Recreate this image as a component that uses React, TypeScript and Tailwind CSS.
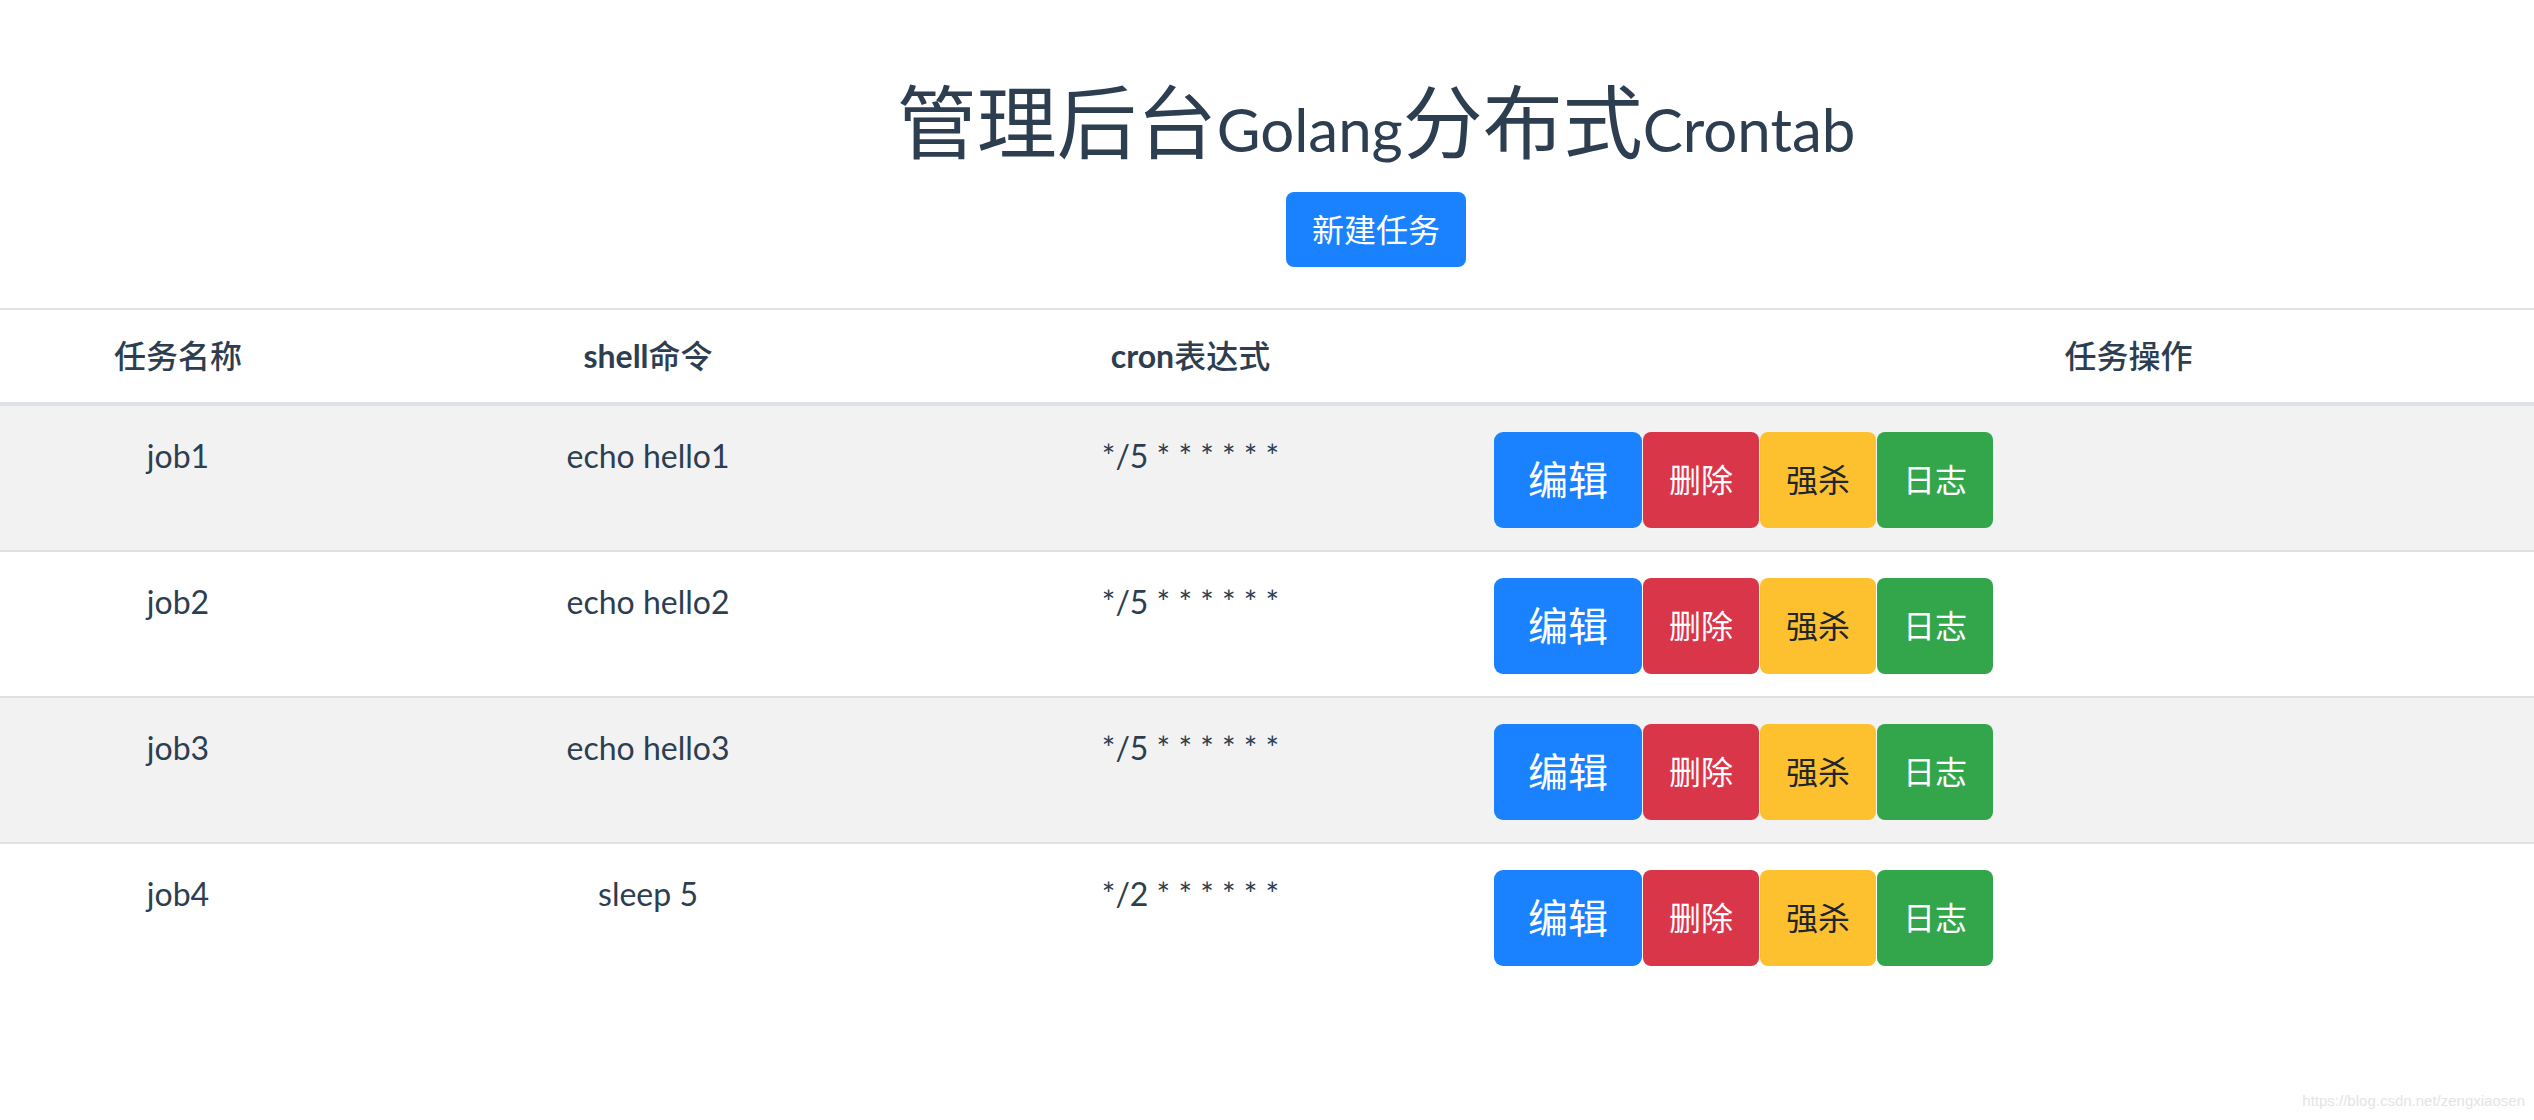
import React from 'react';

interface Job {
  name: string;
  command: string;
  cronExpr: string;
}

const jobs: Job[] = [
  { name: 'job1', command: 'echo hello1', cronExpr: '*/5 * * * * * *' },
  { name: 'job2', command: 'echo hello2', cronExpr: '*/5 * * * * * *' },
  { name: 'job3', command: 'echo hello3', cronExpr: '*/5 * * * * * *' },
  { name: 'job4', command: 'sleep 5', cronExpr: '*/2 * * * * * *' },
];

const font = { fontFamily: 'Lato, "Noto Sans CJK SC", sans-serif' };

function JobRow({ job, index }: { job: Job; index: number }) {
  const striped = index % 2 === 0;
  return (
    <div
      className={`grid grid-cols-[356px_584px_531px_1281px] ${striped ? 'bg-[#f2f2f2]' : 'bg-white'} ${
        index > 0 ? 'border-t-2 border-[#dee2e6]' : ''
      }`}
    >
      <div className="pt-[26px] pb-[22px] leading-[48px] text-center">{job.name}</div>
      <div className="pt-[26px] pb-[22px] leading-[48px] text-center">{job.command}</div>
      <div className="pt-[26px] pb-[22px] pr-[30px] leading-[48px] text-center">{job.cronExpr}</div>
      <div className="pt-[26px] pb-[22px] pl-[23px] flex items-start">
        <div className="flex gap-[1px]">
          <button
            type="button"
            className="w-[148px] h-[96px] rounded-[9px] bg-[#1a82ff] text-white text-[40px] flex items-center justify-center"
          >
            编辑
          </button>
          <button
            type="button"
            className="w-[116px] h-[96px] rounded-[8px] bg-[#da364a] text-white text-[32px] flex items-center justify-center"
          >
            删除
          </button>
          <button
            type="button"
            className="w-[116px] h-[96px] rounded-[8px] bg-[#fdc12f] text-[#212529] text-[32px] flex items-center justify-center"
          >
            强杀
          </button>
          <button
            type="button"
            className="w-[116px] h-[96px] rounded-[8px] bg-[#33a54b] text-white text-[32px] flex items-center justify-center"
          >
            日志
          </button>
        </div>
      </div>
    </div>
  );
}

export default function App() {
  return (
    <div className="relative w-full min-h-[1120px] overflow-hidden bg-white text-[#2c3e50] text-[32px]" style={font}>
      <div className="w-[2752px]">
        {/* Title + new job */}
        <div className="pt-[73px] flex flex-col items-center">
          <h1 className="text-[80px] leading-[96px] font-normal whitespace-nowrap">
            管理后台<span className="text-[60px]">Golang</span>分布式<span className="text-[60px]">Crontab</span>
          </h1>
          <button
            type="button"
            className="mt-[15px] w-[180px] h-[75px] rounded-[8px] bg-[#1a82ff] text-white text-[32px] flex items-center justify-center"
          >
            新建任务
          </button>
        </div>

        {/* Job table */}
        <div className="mt-[41px]">
          <div className="grid grid-cols-[356px_584px_531px_1281px] border-t-2 border-b-4 border-[#dee2e6]">
            <div className="py-[22px] leading-[48px] text-center font-medium">任务名称</div>
            <div className="py-[22px] leading-[48px] text-center font-medium">
              <span className="font-bold">shell</span>命令
            </div>
            <div className="py-[22px] pr-[30px] leading-[48px] text-center font-medium">
              <span className="font-bold">cron</span>表达式
            </div>
            <div className="py-[22px] pl-[34px] leading-[48px] text-center font-medium">任务操作</div>
          </div>
          {jobs.map((job, i) => (
            <JobRow key={job.name} job={job} index={i} />
          ))}
        </div>
      </div>

      {/* watermark */}
      <div
        className="absolute right-[9px] bottom-[8px] text-[15px] text-[#e4e4e4]"
        style={{ fontFamily: '"Liberation Sans", sans-serif' }}
      >
        https://blog.csdn.net/zengxiaosen
      </div>
    </div>
  );
}
